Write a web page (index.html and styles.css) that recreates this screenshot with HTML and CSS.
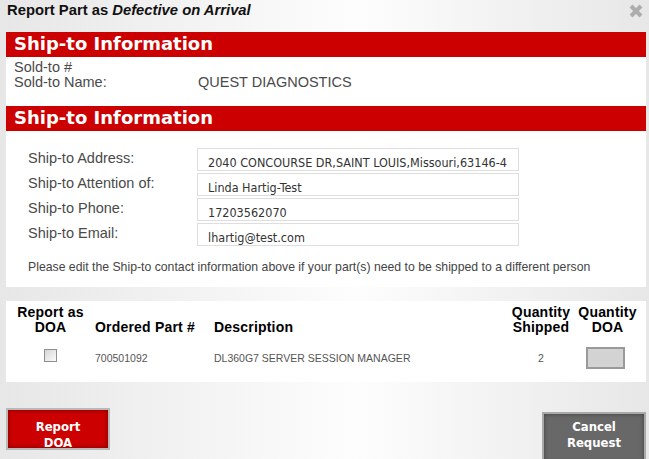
FILE: index.html
```html
<!DOCTYPE html>
<html>
<head>
  <meta charset="utf-8">
  <title>Report Part as Defective on Arrival</title>
  <link rel="stylesheet" href="styles.css">
</head>
<body>
  <div class="dialog">
    <div class="title-bar">
      <h1 class="title">Report Part as <em>Defective on Arrival</em></h1>
      <span class="close">
        <svg width="14" height="14" viewBox="0 0 14 14"><path d="M2 2 L12 12 M12 2 L2 12" stroke="#adadad" stroke-width="4" fill="none"/></svg>
      </span>
    </div>

    <section class="panel">
      <h2 class="panel-head">Ship-to Information</h2>
      <div class="sold-to">
        <span>Sold-to #</span><span></span>
        <span>Sold-to Name:</span><span>QUEST DIAGNOSTICS</span>
      </div>
    </section>

    <section class="panel ship-panel">
      <h2 class="panel-head">Ship-to Information</h2>
      <div class="ship-form">
        <label for="ship-address">Ship-to Address:</label>
        <input type="text" id="ship-address" value="2040 CONCOURSE DR,SAINT LOUIS,Missouri,63146-4118">
        <label for="ship-attention">Ship-to Attention of:</label>
        <input type="text" id="ship-attention" value="Linda Hartig-Test">
        <label for="ship-phone">Ship-to Phone:</label>
        <input type="text" id="ship-phone" value="17203562070">
        <label for="ship-email">Ship-to Email:</label>
        <input type="text" id="ship-email" value="lhartig@test.com">
      </div>
      <p class="note">Please edit the Ship-to contact information above if your part(s) need to be shipped to a different person</p>
    </section>

    <section class="panel parts">
      <div class="th center">Report as<br>DOA</div>
      <div class="th">Ordered Part #</div>
      <div class="th">Description</div>
      <div class="th center">Quantity<br>Shipped</div>
      <div class="th center">Quantity<br>DOA</div>

      <div class="td center"><input type="checkbox" class="doa-check"></div>
      <div class="td">700501092</div>
      <div class="td">DL360G7 SERVER SESSION MANAGER</div>
      <div class="td center">2</div>
      <div class="td center"><input type="text" class="qty"></div>
    </section>

    <div class="actions">
      <button class="btn btn-report">Report<br>DOA</button>
      <button class="btn btn-cancel">Cancel<br>Request</button>
    </div>
  </div>
</body>
</html>
```

FILE: styles.css
```css
html, body {
  margin: 0;
  height: 100%;
}

body {
  width: 649px;
  height: 459px;
  overflow: hidden;
  font-family: "Liberation Sans", Arial, sans-serif;
  background: linear-gradient(90deg, #e7e7e7 0%, #fdfdfd 55%, #e7e7e7 100%);
}

.dialog {
  padding: 0 3px 0 6px;
}

.title-bar {
  display: flex;
  align-items: flex-start;
  height: 32px;
  padding: 0 3px 0 1px;
  box-sizing: border-box;
}

.title {
  margin: 0;
  padding-top: 2px;
  font-size: 14.8px;
  line-height: 17px;
  font-weight: bold;
  color: #111;
}

.close {
  margin-left: auto;
  margin-top: 4px;
  width: 14px;
  height: 14px;
}

.close svg {
  display: block;
}

.panel {
  background: #fff;
}

.panel-head {
  margin: 0;
  height: 25px;
  padding: 0 8px;
  background: #cc0000;
  color: #fff;
  font-family: "DejaVu Sans", Verdana, sans-serif;
  font-size: 18px;
  line-height: 23px;
  font-weight: bold;
}

.sold-to {
  display: grid;
  grid-template-columns: 184px 1fr;
  align-content: start;
  height: 49px;
  box-sizing: border-box;
  padding: 3px 8px 0;
  font-size: 14.5px;
  line-height: 15px;
  color: #4a4a4a;
}

.ship-form {
  display: grid;
  grid-template-columns: 169px 322px;
  row-gap: 2px;
  padding: 17px 0 0 22px;
}

.ship-form label {
  font-size: 14.5px;
  line-height: 21px;
  color: #4a4a4a;
}

.ship-form input {
  height: 23px;
  box-sizing: border-box;
  margin: 0;
  padding: 6px 10px 0;
  border: 1px solid #dedede;
  font-family: "DejaVu Sans Condensed", Tahoma, sans-serif;
  font-size: 12.5px;
  color: #333;
  outline: none;
}

.note {
  margin: 13.5px 0 0;
  padding: 0 0 13.5px 22px;
  font-size: 12.25px;
  line-height: 14px;
  color: #444;
}

.parts {
  margin-top: 14px;
  display: grid;
  grid-template-columns: 89px 119px 1fr 66px 67px;
  padding: 3.5px 5px 13.3px 0;
  row-gap: 11px;
  align-items: end;
}

.th {
  font-size: 14px;
  line-height: 15.5px;
  font-weight: bold;
  color: #000;
  letter-spacing: 0.2px;
}

.td {
  font-size: 10.5px;
  color: #555;
  align-self: center;
}

.center {
  text-align: center;
}

.doa-check {
  appearance: none;
  -webkit-appearance: none;
  display: block;
  width: 13px;
  height: 13px;
  margin: 0 auto 5px;
  border: 1px solid #8f8f8f;
  box-sizing: border-box;
  background: linear-gradient(135deg, #d6d6d6, #fafafa);
}

.qty {
  display: block;
  width: 39px;
  height: 22px;
  box-sizing: border-box;
  margin: 0 0 0 12px;
  border: 2px solid #9a9a9a;
  background: #d3d3d3;
}

.actions {
  display: flex;
  justify-content: space-between;
  align-items: flex-start;
  margin-top: 26px;
}

.btn {
  display: flex;
  flex-direction: column;
  align-items: center;
  justify-content: flex-start;
  width: 104px;
  margin: 0;
  box-sizing: border-box;
  color: #fff;
  font-family: "DejaVu Sans Condensed", Tahoma, sans-serif;
  font-size: 13px;
  line-height: 16px;
  font-weight: bold;
  cursor: pointer;
}

.btn-report {
  height: 42px;
  padding: 9px 0 0;
  border: 2px solid #b9b9b9;
  background: #cc0000;
  box-shadow: inset 0 0 4px rgba(0, 0, 0, 0.45);
}

.btn-cancel {
  height: 52px;
  margin-top: 4px;
  padding: 5px 0 0;
  border: 2px solid #a9a9a9;
  background: #686868;
  box-shadow: inset 0 0 4px rgba(0, 0, 0, 0.4);
}
```
